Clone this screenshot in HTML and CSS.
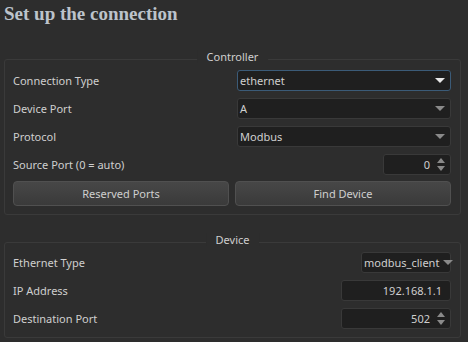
FILE: index.html
```html
<!DOCTYPE html>
<html lang="en">
<head>
    <meta charset="UTF-8">
    <meta name="viewport" content="width=device-width, initial-scale=1.0">
    <title>Set up the connection</title>
    <link rel="stylesheet" href="styles.css">
</head>
<body>
    <h1 class="page-title">Set up the connection</h1>

    <div class="group group-controller">
        <span class="group-title">Controller</span>
        <div class="form-grid">
            <label>Connection Type</label>
            <div class="combo focused">
                <span>ethernet</span>
                <span class="arrow"></span>
            </div>

            <label>Device Port</label>
            <div class="combo">
                <span>A</span>
                <span class="arrow"></span>
            </div>

            <label>Protocol</label>
            <div class="combo">
                <span>Modbus</span>
                <span class="arrow"></span>
            </div>

            <label>Source Port (0 = auto)</label>
            <div class="spin spin-small">
                <span class="value">0</span>
                <span class="spin-arrows"><i class="up"></i><i class="down"></i></span>
            </div>
        </div>
        <div class="buttons">
            <button class="btn">Reserved Ports</button>
            <button class="btn">Find Device</button>
        </div>
    </div>

    <div class="group group-device">
        <span class="group-title">Device</span>
        <div class="form-grid">
            <label>Ethernet Type</label>
            <div class="combo combo-small">
                <span>modbus_client</span>
                <span class="arrow"></span>
            </div>

            <label>IP Address</label>
            <div class="spin spin-wide">
                <span class="value">192.168.1.1</span>
            </div>

            <label>Destination Port</label>
            <div class="spin spin-wide">
                <span class="value">502</span>
                <span class="spin-arrows"><i class="up"></i><i class="down"></i></span>
            </div>
        </div>
    </div>
</body>
</html>
```

FILE: styles.css
```css
* {
    margin: 0;
    padding: 0;
    box-sizing: border-box;
}

body {
    font-family: 'Noto Sans', 'Liberation Sans', sans-serif;
    font-size: 11px;
    background: #2d2d2d;
    color: #cfcfcf;
    width: 468px;
    height: 342px;
    overflow: hidden;
    padding: 0 7px 0 4px;
}

.page-title {
    font-family: 'Liberation Serif', serif;
    font-weight: bold;
    font-size: 19px;
    color: #bcc3cb;
    height: 24px;
    padding-top: 5px;
    line-height: 18px;
}

.group {
    position: relative;
    border: 1px solid #3a3a3a;
    border-radius: 3px;
    padding: 10px 9px 8px 8px;
}

.group-controller {
    margin-top: 35px;
}

.group-device {
    margin-top: 27px;
}

.group-title {
    position: absolute;
    top: -10px;
    left: 50%;
    transform: translateX(-50%);
    background: #2d2d2d;
    padding: 0 10px;
    line-height: 13px;
    color: #cfcfcf;
}

.group-device .form-grid {
    margin-top: -1px;
}

.form-grid {
    display: grid;
    grid-template-columns: 224px 214px;
    row-gap: 7px;
    align-items: center;
}

.form-grid label {
    line-height: 21px;
}

.combo,
.spin {
    height: 21px;
    background: #1f1f1f;
    border: 1px solid #393939;
    border-radius: 3px;
    display: flex;
    align-items: center;
}

.combo {
    justify-content: space-between;
    padding: 0 5px 0 2px;
}

.combo.focused {
    border-color: #3b5b78;
}

.combo .arrow {
    width: 0;
    height: 0;
    border-left: 5px solid transparent;
    border-right: 5px solid transparent;
    border-top: 5px solid #8a8a8a;
}

.combo.focused .arrow {
    border-top-color: #e8e8e8;
}

.combo-small {
    justify-self: end;
    width: 90px;
    padding-left: 2px;
    gap: 4px;
}

.spin {
    justify-self: end;
    justify-content: flex-end;
    padding-right: 5px;
}

.spin-small {
    width: 68px;
}

.spin-wide {
    width: 110px;
}

.spin .value {
    padding-right: 3px;
}

.spin-arrows {
    display: flex;
    flex-direction: column;
    gap: 3px;
    margin-left: 4px;
}

.spin-arrows i {
    display: block;
    width: 0;
    height: 0;
    border-left: 4px solid transparent;
    border-right: 4px solid transparent;
}

.spin-arrows .up {
    border-bottom: 5px solid #8a8a8a;
}

.spin-arrows .down {
    border-top: 5px solid #8a8a8a;
}

.buttons {
    display: grid;
    grid-template-columns: 1fr 1fr;
    gap: 6px;
    margin-top: 6px;
}

.btn {
    height: 25px;
    font-family: inherit;
    font-size: inherit;
    color: #cfcfcf;
    background: linear-gradient(#474747, #3a3a3a);
    border: 1px solid #505050;
    border-radius: 4px;
}
```
